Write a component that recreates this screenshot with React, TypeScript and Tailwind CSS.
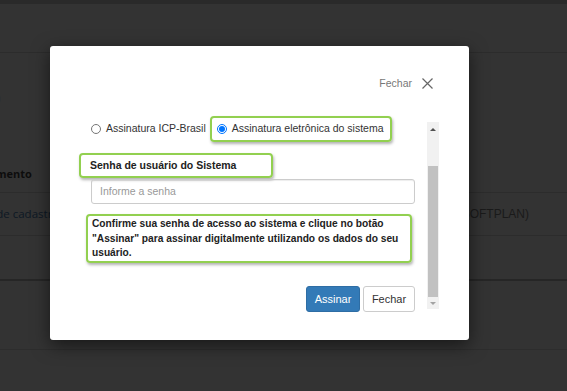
import React from "react"

function Radio({ checked }: { checked?: boolean }) {
  if (checked) {
    return (
      <span className="flex h-[10px] w-[10px] shrink-0 items-center justify-center rounded-full border border-[#0075ff] bg-white">
        <span className="h-[6px] w-[6px] rounded-full bg-[#0075ff]" />
      </span>
    )
  }
  return <span className="h-[10px] w-[10px] shrink-0 rounded-full border border-[#767676] bg-white" />
}

function BackgroundPage() {
  return (
    <div className="flex h-full w-full flex-col bg-[#333333]">
      <div className="h-[4px] bg-[#2a2a2a]" />
      <div className="h-[49px] border-b border-[#2c2c2c]" />
      <div className="flex h-[140px] flex-col border-b border-[#2c2c2c]">
        <span className="-ml-[4px] mt-[36px] text-[15px] leading-[18px] text-[#262626]">)</span>
        <span className="-ml-[49px] mt-[60px] font-['Open_Sans',sans-serif] text-[11px] font-bold leading-[14px] text-[#0d0d0d]">
          Departamento
        </span>
      </div>
      <div className="flex h-[43px] items-center justify-between border-b border-[#2c2c2c]">
        <span className="-ml-[55px] font-['Open_Sans',sans-serif] text-[11.5px] text-[#0d1824]">Cadastro de cadastro</span>
        <span className="mr-[38px] text-[12px] text-[#1a1a1a]">Usuário (SOFTPLAN)</span>
      </div>
      <div className="h-[43px]" />
      <div className="h-[2px] bg-[#262626]" />
      <div className="h-[69px] border-b border-[#2d2d2d]" />
    </div>
  )
}

function Scrollbar() {
  return (
    <div className="mt-[6px] flex h-[187px] w-[12px] shrink-0 flex-col bg-[#f1f1f1]">
      <div className="flex h-[14px] items-center justify-center">
        <span className="h-0 w-0 border-x-[3px] border-b-[3px] border-x-transparent border-b-[#505050]" />
      </div>
      <div className="h-[30px]" />
      <div className="mx-[1px] h-[131px] bg-[#c1c1c1]" />
      <div className="flex h-[12px] items-center justify-center">
        <span className="h-0 w-0 border-x-[3px] border-t-[3px] border-x-transparent border-t-[#a3a3a3]" />
      </div>
    </div>
  )
}

function Modal() {
  return (
    <div className="absolute left-[50px] top-[46px] flex h-[294px] w-[419px] flex-col rounded-[3px] bg-white shadow-[0_5px_18px_rgba(0,0,0,0.55)]">
      <div className="flex h-[43px] items-end justify-end pr-[36px]">
        <div className="flex h-[11px] items-center gap-[10px]">
          <span className="text-[10.5px] text-[#777777]">Fechar</span>
          <svg width="11" height="11" viewBox="0 0 11 11" fill="none" stroke="#666666" strokeWidth="1.2">
            <path d="M0.5 0.5 L10.5 10.5 M10.5 0.5 L0.5 10.5" />
          </svg>
        </div>
      </div>

      <div className="mt-[27px] flex pl-[41px]">
        <div className="flex w-[324px] flex-col text-[10.5px] text-[#333333]">
          <div className="flex h-[26px] items-center">
            <Radio />
            <span className="ml-[5px]">Assinatura ICP-Brasil</span>
            <div className="ml-[4px] flex h-[26px] items-center rounded-[4px] border-[2.5px] border-[#92d050] pl-[5px] pr-[6px] shadow-[1px_2px_3px_rgba(0,0,0,0.3)]">
              <Radio checked />
              <span className="ml-[5px]">Assinatura eletrônica do sistema</span>
            </div>
          </div>

          <div className="-ml-[12px] mt-[11px] flex h-[25px] w-[194px] items-center rounded-[4px] border-[2.5px] border-[#92d050] pl-[9px] font-bold text-[#222222] shadow-[1px_2px_3px_rgba(0,0,0,0.3)]">
            Senha de usuário do Sistema
          </div>

          <div className="mt-[1px] flex h-[25px] w-full items-center rounded-[3px] border border-[#cccccc] pl-[8px] text-[#999999] shadow-[inset_0_1px_1px_rgba(0,0,0,0.075)]">
            Informe a senha
          </div>

          <div className="-ml-[5px] mt-[10px] h-[49px] w-[326px] whitespace-nowrap rounded-[4px] border-[2.5px] border-[#92d050] px-[4px] pt-[1px] text-[10.2px] font-bold leading-[14.5px] text-[#222222] shadow-[1px_2px_3px_rgba(0,0,0,0.3)]">
            Confirme sua senha de acesso ao sistema e clique no botão
            <br />
            "Assinar" para assinar digitalmente utilizando os dados do seu
            <br />
            usuário.
          </div>

          <div className="mt-[23px] flex justify-end gap-[3px]">
            <button className="h-[26px] w-[54px] rounded-[3px] border border-[#2e6da4] bg-[#337ab7] text-[11px] text-white">
              Assinar
            </button>
            <button className="h-[26px] w-[52px] rounded-[3px] border border-[#cccccc] bg-white text-[11px] text-[#333333]">
              Fechar
            </button>
          </div>
        </div>
        <div className="ml-[12px]">
          <Scrollbar />
        </div>
      </div>
    </div>
  )
}

export default function App() {
  return (
    <div className="relative h-[391px] w-[567px] overflow-hidden font-['Liberation_Sans',Arial,sans-serif]">
      <BackgroundPage />
      <Modal />
    </div>
  )
}
